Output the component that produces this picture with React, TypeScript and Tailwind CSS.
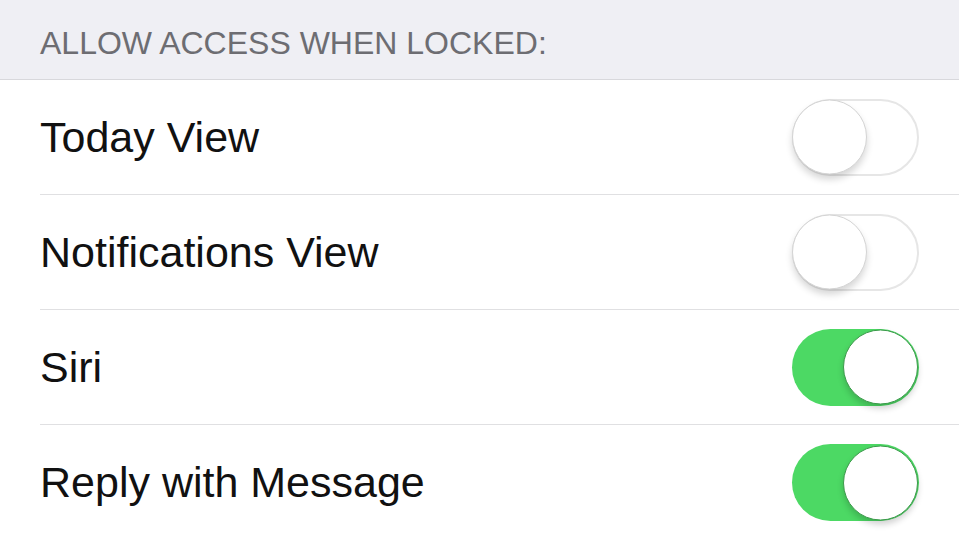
import React, { useState } from 'react';

type Item = { label: string; on: boolean };

const Toggle = ({ on, onClick }: { on: boolean; onClick: () => void }) => {
  return (
    <button
      onClick={onClick}
      className={`relative w-[127px] h-[77px] rounded-full shrink-0 ${
        on ? 'bg-[#4cd964]' : 'bg-white border-2 border-[#e6e6e6]'
      }`}
    >
      <span
        className={`absolute top-1/2 -translate-y-1/2 w-[75px] h-[75px] rounded-full bg-white ${
          on
            ? 'right-[1px] border border-[#3c9a4b] shadow-[0_4px_6px_rgba(0,0,0,0.18)]'
            : '-left-[2px] border border-[#d4d4d4] shadow-[0_5px_7px_rgba(0,0,0,0.16)]'
        }`}
      />
    </button>
  );
};

const App = () => {
  const [items, setItems] = useState<Item[]>([
    { label: 'Today View', on: false },
    { label: 'Notifications View', on: false },
    { label: 'Siri', on: true },
    { label: 'Reply with Message', on: true },
  ]);

  const flip = (i: number) => {
    setItems(items.map((it, j) => (j === i ? { ...it, on: !it.on } : it)));
  };

  return (
    <div
      className="w-[959px] h-[540px] overflow-hidden bg-white"
      style={{ fontFamily: '"Liberation Sans", Arial, sans-serif' }}
    >
      {/* section header */}
      <div className="h-[80px] bg-[#efeff4] border-b border-[#d8d8dc] pl-[40px] pt-[27px]">
        <p className="text-[32px] leading-none text-[#6d6d72]">ALLOW ACCESS WHEN LOCKED:</p>
      </div>

      {items.map((it, i) => (
        <div key={it.label} className="h-[115px] pl-[40px]">
          <div
            className={`h-full flex items-center justify-between pr-[40px] ${
              i < items.length - 1 ? 'border-b border-[#e0e0e2]' : ''
            }`}
          >
            <span className="text-[43px] leading-none text-[#111]">{it.label}</span>
            <Toggle on={it.on} onClick={() => flip(i)} />
          </div>
        </div>
      ))}
    </div>
  );
};

export default App;
